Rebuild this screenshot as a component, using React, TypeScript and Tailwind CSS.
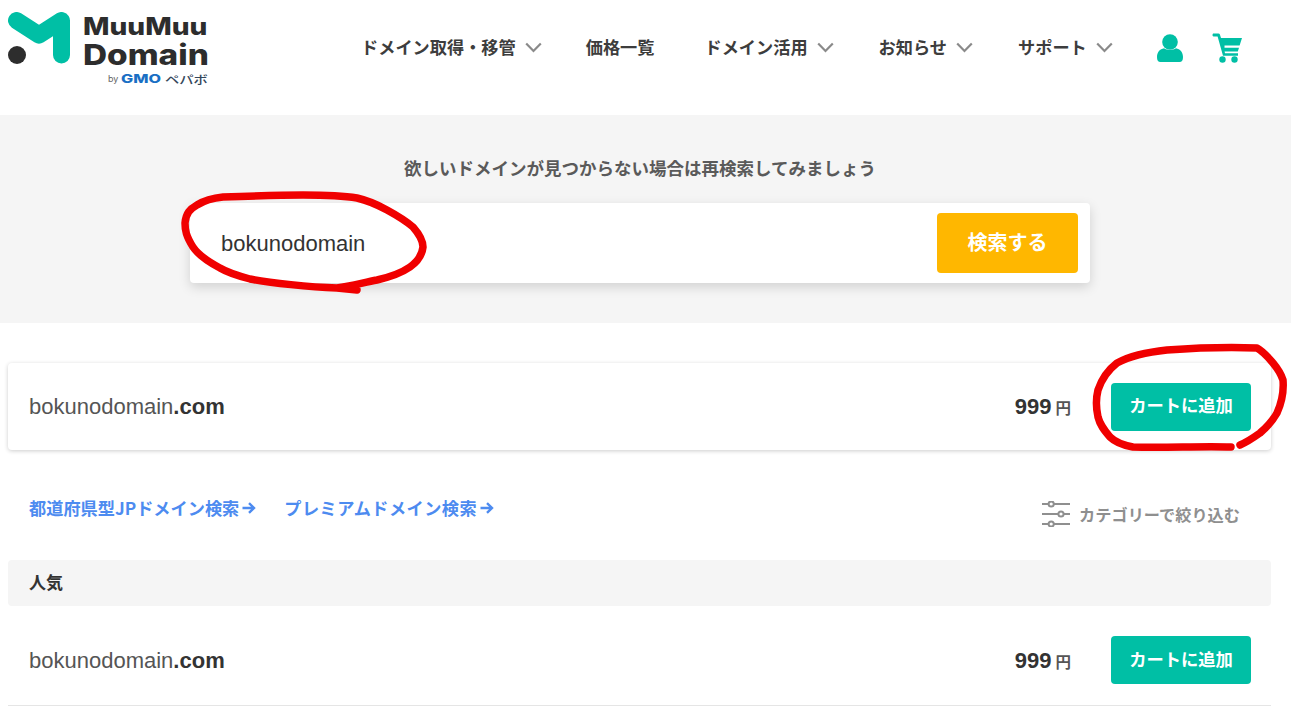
import React from "react";

const jp = "font-['Noto_Sans_CJK_JP','Noto_Sans',sans-serif]";

const navItems = [
  { label: "ドメイン取得・移管", caret: true, extra: "" },
  { label: "価格一覧", caret: false, extra: "mr-[6px]" },
  { label: "ドメイン活用", caret: true, extra: "mr-[1px]" },
  { label: "お知らせ", caret: true, extra: "mr-[1px]" },
  { label: "サポート", caret: true, extra: "" },
];

function Caret() {
  return (
    <svg width="17" height="11" viewBox="0 0 17 11" fill="none" stroke="#8a8a8a" strokeWidth="2.2">
      <path d="M1.2 1.5 L8.5 9 L15.8 1.5" />
    </svg>
  );
}

function LinkArrow() {
  return (
    <svg width="14" height="12" viewBox="0 0 14 12" fill="none" stroke="#4d8bf0" strokeWidth="2.4">
      <path d="M0.5 6 H12 M7 1.2 L12 6 L7 10.8" />
    </svg>
  );
}

function Logo() {
  return (
    <div className="flex w-[210px] shrink-0 items-start pl-2 pt-[12px]">
      <svg width="64" height="54" viewBox="0 0 64 54" className="shrink-0">
        <circle cx="9" cy="43" r="9" fill="#2d2d2d" />
        <path d="M8.5 8.5 L31 23 L53.5 8.5 L53.5 43" fill="none" stroke="#00bfa5" strokeWidth="17" strokeLinecap="round" strokeLinejoin="round" />
      </svg>
      <div className="ml-[11px] flex flex-col font-['Inter',sans-serif] text-[#2d2d2d]">
        <span className="block origin-left scale-x-[1.17] text-[24px] font-extrabold leading-[29px]">MuuMuu</span>
        <span className="block origin-left scale-x-[1.19] text-[28px] font-extrabold leading-[29px]">Domain</span>
        <span className="mt-[4px] flex items-center text-[9px] leading-[10px]">
          <span className="ml-[25px] w-[13px] text-[#666]">by</span>
          <span className="w-[44px] origin-left scale-x-[1.35] text-[12px] font-extrabold text-[#1a6fc4]">GMO</span>
          <span className={`${jp} origin-left scale-x-[1.3] text-[11px] font-medium text-[#33475b]`}>ペパボ</span>
        </span>
      </div>
    </div>
  );
}

function Header() {
  return (
    <header className="flex h-[115px] items-start bg-white">
      <Logo />
      <nav className="ml-[151px] flex items-center gap-[44px] pt-[33px]">
        {navItems.map((item) => (
          <div key={item.label} className={`flex h-[28px] items-center gap-[9px] text-[17.2px] font-bold text-[#3d3d3d] ${jp} ${item.extra}`}>
            <span>{item.label}</span>
            {item.caret && <Caret />}
          </div>
        ))}
      </nav>
      <div className="ml-auto mr-[49px] flex items-center gap-[29px] pt-[33px]">
        <svg width="26" height="28" viewBox="0 0 26 28" fill="#00bfa5">
          <circle cx="13" cy="8" r="7.8" />
          <path d="M0 23 C0 18 3 15 7 14.2 C10 16.5 16 16.5 19 14.2 C23 15 26 18 26 23 C26 26.5 25 28 22.5 28 L3.5 28 C1 28 0 26.5 0 23 Z" />
        </svg>
        <svg width="30" height="30" viewBox="0 0 30 30" fill="#00bfa5">
          <path d="M1.5 0.5 H6.5 C7.2 0.5 7.6 0.8 7.9 1.5 L9 5 H30 L27.6 12.5 H12.5 V14.8 H27 L25.8 18.5 L12.6 18.5 L13 20.2 H26 V22.8 H11 L5.6 3.4 H1.5 C0.2 3.4 0.2 0.5 1.5 0.5 Z" />
          <circle cx="10.5" cy="26.5" r="3.2" />
          <circle cx="22.5" cy="26.5" r="3.2" />
        </svg>
      </div>
    </header>
  );
}

function SearchSection() {
  return (
    <section className="flex h-[208px] flex-col items-center bg-[#f5f5f5] pr-[11px] pt-[40px]">
      <p className={`text-[17.5px] font-bold leading-[26px] text-[#5a5a5a] ${jp}`}>欲しいドメインが見つからない場合は再検索してみましょう</p>
      <div className="mt-[22px] flex h-[80px] w-[900px] items-center justify-between rounded-[4px] bg-white pl-[31px] pr-[12px] shadow-[0_4px_12px_rgba(0,0,0,0.15)]">
        <span className="font-['Liberation_Sans',sans-serif] text-[22px] text-[#333]">bokunodomain</span>
        <button className={`h-[60px] w-[141px] rounded-[4px] bg-[#ffb700] pb-[3px] text-[20px] font-bold text-white ${jp}`}>検索する</button>
      </div>
    </section>
  );
}

function DomainRow() {
  return (
    <>
      <span className="font-['Liberation_Sans',sans-serif] text-[22px] text-[#555]">
        bokunodomain<span className="font-bold text-[#333]">.com</span>
      </span>
      <div className="flex items-center">
        <span className="font-['Liberation_Sans',sans-serif] text-[22px] font-bold text-[#333]">999</span>
        <span className={`ml-[4px] mt-[3px] text-[15.5px] font-bold text-[#555] ${jp}`}>円</span>
        <button className={`ml-[40px] h-[48px] w-[140px] rounded-[4px] bg-[#00bfa5] pb-[3px] text-[17.3px] font-bold text-white ${jp}`}>カートに追加</button>
      </div>
    </>
  );
}

function Filters() {
  return (
    <div className="flex items-start justify-between pl-[21px] pr-[31px] pt-[45px]">
      <div className={`flex gap-[28px] text-[17.2px] font-bold leading-[26px] text-[#4d8bf0] ${jp}`}>
        <span className="flex items-center gap-[3px]">都道府県型JPドメイン検索<LinkArrow /></span>
        <span className="flex items-center gap-[3px] tracking-[0.45px]">プレミアムドメイン検索<LinkArrow /></span>
      </div>
      <div className={`mt-[6px] flex items-center gap-[9px] text-[16.2px] font-bold leading-[26px] text-[#8f8f8f] ${jp}`}>
        <svg width="28" height="26" viewBox="0 0 28 26" fill="none" stroke="#8f8f8f" strokeWidth="2">
          <path d="M0 3 H6.5 M12 3 H28 M0 13 H16 M22 13 H28 M0 23 H6.5 M12 23 H28" />
          <circle cx="9.2" cy="3" r="2.6" />
          <circle cx="19" cy="13" r="2.6" />
          <circle cx="9.2" cy="23" r="2.6" />
        </svg>
        <span>カテゴリーで絞り込む</span>
      </div>
    </div>
  );
}

export default function App() {
  return (
    <div className="relative h-[708px] overflow-hidden bg-white">
      <Header />
      <SearchSection />
      <main className="px-[8px] pr-[20px] pt-[40px]">
        <div className="flex h-[87px] items-center justify-between rounded-[4px] bg-white pl-[21px] pr-[20px] shadow-[0_1px_4px_rgba(0,0,0,0.2)]">
          <DomainRow />
        </div>
        <Filters />
        <div className={`mt-[33px] flex h-[46px] items-center rounded-[4px] bg-[#f5f5f5] pb-[3px] pl-[21px] text-[17px] font-bold text-[#333] ${jp}`}>人気</div>
        <div className="flex h-[100px] items-center justify-between border-b border-[#e5e5e5] pl-[21px] pr-[20px] pt-[9px]">
          <DomainRow />
        </div>
      </main>
      {/* hand-drawn red marks on top of the page */}
      <svg className="pointer-events-none absolute left-0 top-0" width="1291" height="708" fill="none" stroke="#f00000" strokeWidth="7.5" strokeLinecap="round" strokeLinejoin="round">
        <path d="M357 290 L337 288 C310 287 270 283 250 279 C235 275 225 271 220 268 C205 260 197 253 193 247 C186 236 185 230 185 223 C186 213 190 209 197 205 C205 200 213 198 223 197 C250 196 280 195 303 195 C325 195 345 196 357 198 C370 201 378 205 387 210 C398 216 406 221 413 227 C420 235 423 241 423 247 C422 256 417 262 410 267 C400 274 390 277 377 280 C362 283 350 286 337 288" />
        <path d="M1231 447 C1200 446 1165 448 1133 447 C1122 445 1115 442 1110 437 C1104 430 1100 425 1098 417 C1096 408 1096 398 1098 390 C1102 378 1108 370 1117 363 C1130 356 1148 352 1167 350 C1195 348 1230 347 1257 348 C1264 352 1268 357 1273 363 C1278 369 1281 374 1283 380 C1284 392 1281 404 1277 413 C1272 422 1266 428 1260 433 C1253 438 1247 442 1240 445" />
      </svg>
    </div>
  );
}
